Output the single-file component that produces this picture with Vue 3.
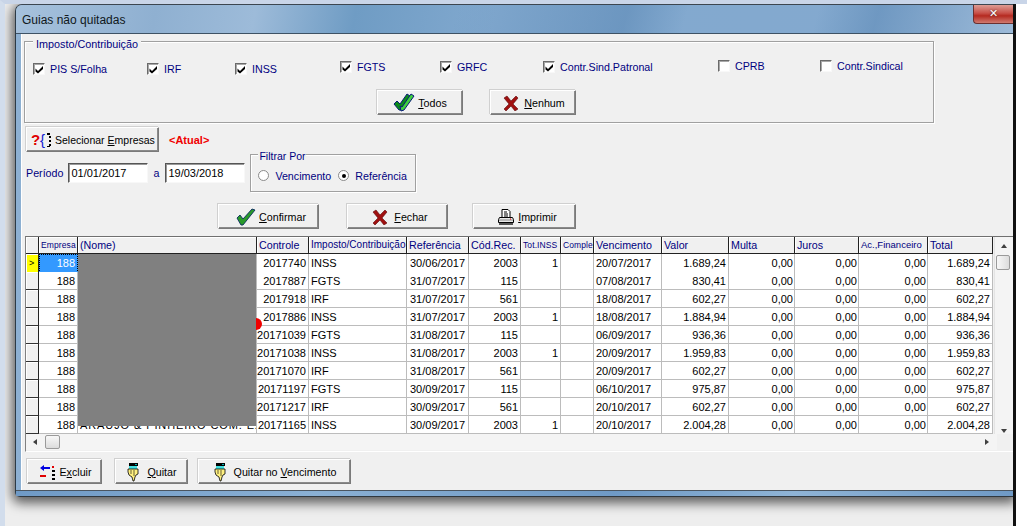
<script setup>
const checks = [
  { label: 'PIS S/Folha', on: true, pos: 'low' },
  { label: 'IRF', on: true, pos: 'low' },
  { label: 'INSS', on: true, pos: 'low' },
  { label: 'FGTS', on: true, pos: 'mid' },
  { label: 'GRFC', on: true, pos: 'mid' },
  { label: 'Contr.Sind.Patronal', on: true, pos: 'mid' },
  { label: 'CPRB', on: false, pos: 'high' },
  { label: 'Contr.Sindical', on: false, pos: 'high' }
]
const headers = [
  { t: '', c: 'ind' },
  { t: 'Empresa', c: 'tiny' },
  { t: '(Nome)', c: '' },
  { t: 'Controle', c: '' },
  { t: 'Imposto/Contribuição', c: 'small' },
  { t: 'Referência', c: '' },
  { t: 'Cód.Rec.', c: '' },
  { t: 'Tot.INSS', c: 'tiny' },
  { t: 'Comple', c: 'tiny' },
  { t: 'Vencimento', c: '' },
  { t: 'Valor', c: '' },
  { t: 'Multa', c: '' },
  { t: 'Juros', c: '' },
  { t: 'Ac.,Financeiro', c: 'smaller' },
  { t: 'Total', c: '' }
]
const rows = [
  ['2017740', 'INSS', '30/06/2017', '2003', '1', '20/07/2017', '1.689,24'],
  ['2017887', 'FGTS', '31/07/2017', '115', '', '07/08/2017', '830,41'],
  ['2017918', 'IRF', '31/07/2017', '561', '', '18/08/2017', '602,27'],
  ['2017886', 'INSS', '31/07/2017', '2003', '1', '18/08/2017', '1.884,94'],
  ['20171039', 'FGTS', '31/08/2017', '115', '', '06/09/2017', '936,36'],
  ['20171038', 'INSS', '31/08/2017', '2003', '1', '20/09/2017', '1.959,83'],
  ['20171070', 'IRF', '31/08/2017', '561', '', '20/09/2017', '602,27'],
  ['20171197', 'FGTS', '30/09/2017', '115', '', '06/10/2017', '975,87'],
  ['20171217', 'IRF', '30/09/2017', '561', '', '20/10/2017', '602,27'],
  ['20171165', 'INSS', '30/09/2017', '2003', '1', '20/10/2017', '2.004,28']
]
</script>

<template>
  <div class="page">
    <div class="desk">
      <div class="window">
        <div class="title">
          <span class="title-text">Guias não quitadas</span>
          <div class="close"><span class="close-x">✕</span></div>
        </div>
        <div class="client">
          <div class="group">
            <span class="legend">Imposto/Contribuição</span>
            <div class="checks">
              <label v-for="c in checks" :key="c.label" class="check" :class="c.pos">
                <span class="box">
                  <svg v-if="c.on" width="9" height="9" viewBox="0 0 9 9"><path d="M0.500 3.500l2.500 2.500L8 1v3L3 8.500.5 6.500z" fill="#000"/></svg>
                </span>
                <span>{{ c.label }}</span>
              </label>
            </div>
            <div class="group-btns">
              <button class="btn btn-all">
                <svg width="22" height="20" viewBox="0 0 22 20">
                  <path d="M1 11l3-3 3 3 7-10 3 2-9 14h-2z" fill="#0c8a1c" stroke="#0a1a78" stroke-width="1"/>
                  <path d="M7 13l2 1 9-13 3 2-10 14-3 1z" fill="#3fcf3f" stroke="#0a1a78" stroke-width="1"/>
                </svg>
                <span class="cap"><u>T</u>odos</span>
              </button>
              <button class="btn btn-none">
                <svg width="16" height="16" viewBox="0 0 16 16"><path d="M1 3l3-2 4 5 5-5 2 2-5 6 5 5-3 2-4-5-5 5-2-2 5-5z" fill="#a01010" stroke="#5c0808" stroke-width=".6"/></svg>
                <span class="cap"><u>N</u>enhum</span>
              </button>
            </div>
          </div>

          <div class="row-select">
            <button class="btn btn-select">
              <svg width="24" height="18" viewBox="0 0 24 18">
                <text x="0" y="14" font-family="Liberation Sans" font-weight="700" font-size="15" fill="#e00000">?</text>
                <text x="9" y="14" font-family="Liberation Sans" font-size="15" fill="#1020d0">{</text>
                <path d="M16 2h3v2h-3zM18 5h2v2h-2zM18 9h2v2h-2zM18 13h2v2h-2zM16 15h3v1h-3z" fill="#000"/>
              </svg>
              <span class="cap">Selecionar <u>E</u>mpresas</span>
            </button>
            <span class="atual">&lt;Atual&gt;</span>
          </div>

          <div class="row-period">
            <span class="navy">Período</span>
            <span class="input first">01/01/2017</span>
            <span class="navy sep">a</span>
            <span class="input">19/03/2018</span>
            <div class="filter">
              <span class="legend legend-filter">Filtrar Por</span>
              <span class="radio"></span>
              <span class="navy lbl1">Vencimento</span>
              <span class="radio on"></span>
              <span class="navy">Referência</span>
            </div>
          </div>

          <div class="row-actions">
            <button class="btn btn-confirm">
              <svg width="20" height="18" viewBox="0 0 20 18"><path d="M1 10l3-3 3 4 9-10 3 1-12 15H5z" fill="#2a9a2a" stroke="#0a2a60" stroke-width=".9"/></svg>
              <span class="cap"><u>C</u>onfirmar</span>
            </button>
            <button class="btn btn-close">
              <svg width="16" height="16" viewBox="0 0 16 16"><path d="M1 3l3-2 4 5 5-5 2 2-5 6 5 5-3 2-4-5-5 5-2-2 5-5z" fill="#a01010" stroke="#5c0808" stroke-width=".6"/></svg>
              <span class="cap"><u>F</u>echar</span>
            </button>
            <button class="btn btn-print">
              <svg width="18" height="18" viewBox="0 0 18 18">
                <path d="M5 1.500h6l2 2v6H5z" fill="#fff" stroke="#000"/>
                <path d="M7 4h3M7 6h4M7 8h4" stroke="#000"/>
                <path d="M2.500 9.500h13l1 2v3h-15v-3z" fill="#e8e8e8" stroke="#000"/>
                <path d="M2 12h14" stroke="#888"/>
                <rect x="13" y="10.500" width="1" height="1" fill="#e00000"/>
                <rect x="2" y="15" width="14" height="2" fill="#555"/>
              </svg>
              <span class="cap"><u>I</u>mprimir</span>
            </button>
          </div>

          <div class="frame">
            <div class="table-wrap">
              <div class="table">
                <div class="tr head">
                  <div v-for="h in headers" :key="h.t" class="th" :class="h.c">{{ h.t }}</div>
                </div>
                <div class="body">
                  <div v-for="(r, i) in rows" :key="r[0]" class="tr">
                    <div class="ind-cell" :class="{ cur: i === 0 }">{{ i === 0 ? '>' : '' }}</div>
                    <div class="td num" :class="{ sel: i === 0 }">188</div>
                    <div class="td name">{{ i === 9 ? 'ARAUJO & PINHEIRO COM. EXTER' : '' }}</div>
                    <div class="td num">{{ r[0] }}</div>
                    <div class="td">{{ r[1] }}</div>
                    <div class="td ref">{{ r[2] }}</div>
                    <div class="td num">{{ r[3] }}</div>
                    <div class="td num">{{ r[4] }}</div>
                    <div class="td"></div>
                    <div class="td">{{ r[5] }}</div>
                    <div class="td num">{{ r[6] }}</div>
                    <div class="td num zero">0,00</div>
                    <div class="td num zero">0,00</div>
                    <div class="td num zero">0,00</div>
                    <div class="td num">{{ r[6] }}</div>
                  </div>
                  <div class="dot"></div>
                  <div class="mask"></div>
                </div>
              </div>
              <div class="vbar">
                <span class="arrow up"></span>
                <span class="vthumb"></span>
                <span class="arrow down"></span>
              </div>
            </div>
            <div class="hbar">
              <span class="arrow left"></span>
              <span class="hthumb"></span>
              <span class="arrow right"></span>
            </div>
          </div>

          <div class="row-bottom">
            <button class="btn btn-del">
              <svg width="20" height="18" viewBox="0 0 20 18">
                <path d="M3 5l4-3v2h6v2H7v2z" fill="#0000e0"/>
                <rect x="3" y="12" width="6" height="2" fill="#e00000"/>
                <rect x="15" y="3" width="2" height="2" fill="#e00000"/>
                <path d="M15 7h3v2h-3zM15 11h3v2h-3zM15 15h3v2h-3z" fill="#000"/>
              </svg>
              <span class="cap">E<u>x</u>cluir</span>
            </button>
            <button class="btn btn-pay">
              <svg width="14" height="20" viewBox="0 0 14 20">
                <path d="M3 1h9v3H3z" fill="#000"/>
                <rect x="9" y="2" width="2" height="1" fill="#00b0b0"/>
                <rect x="3" y="4" width="8" height="3" fill="#40e0e0"/>
                <path d="M2 7h10v5l-2 1-1 2-1 4H7l-1-4-3-2-1-3z" fill="#fff080" stroke="#000" stroke-width=".8"/>
                <path d="M5 8v4M8 8v6" stroke="#000" stroke-width=".6"/>
              </svg>
              <span class="cap"><u>Q</u>uitar</span>
            </button>
            <button class="btn btn-payall">
              <svg width="14" height="20" viewBox="0 0 14 20">
                <path d="M3 1h9v3H3z" fill="#000"/>
                <rect x="9" y="2" width="2" height="1" fill="#00b0b0"/>
                <rect x="3" y="4" width="8" height="3" fill="#40e0e0"/>
                <path d="M2 7h10v5l-2 1-1 2-1 4H7l-1-4-3-2-1-3z" fill="#fff080" stroke="#000" stroke-width=".8"/>
                <path d="M5 8v4M8 8v6" stroke="#000" stroke-width=".6"/>
              </svg>
              <span class="cap">Quitar no <u>V</u>encimento</span>
            </button>
          </div>
        </div>
        <div class="bottom-edge"></div>
      </div>
    </div>
  </div>
</template>

<style>
html, body { margin: 0; background: #fff; overflow: hidden; }
</style>

<style scoped>
.page {
  width: 1027px;
  height: 526px;
  box-sizing: border-box;
  border-left: 5px solid #d2ddec;
  border-top: 4px solid #c9d5e8;
  background: #fff;
  overflow: hidden;
  font-family: "Liberation Sans", Arial, sans-serif;
  font-size: 10.7px;
  color: #000;
}
.desk {
  width: 1011px;
  height: 522px;
  box-sizing: border-box;
  border-right: 3px solid #111;
  background: #eeeeee;
  padding-left: 10px;
  overflow: hidden;
}
.window {
  width: 998px;
  height: 493px;
  box-sizing: border-box;
  border-left: 1px solid #2c3a46;
  border-top: 1px solid #3c4650;
  border-bottom: 1px solid #30383f;
  border-radius: 7px 0 0 5px;
  display: flex;
  flex-direction: column;
  box-shadow: 0 3px 12px 3px rgba(0, 0, 0, .62);
  background: #8db0d2;
}
.title {
  height: 28px;
  flex: none;
  border-bottom: 1px solid #3e5264;
  box-sizing: content-box;
  display: flex;
  justify-content: space-between;
  align-items: flex-start;
  background:
    linear-gradient(105deg, rgba(255,255,255,0) 44%, rgba(90,135,180,.55) 61%, rgba(255,255,255,0) 67%, rgba(255,255,255,0) 80%, rgba(90,135,180,.5) 86%, rgba(255,255,255,.2) 100%),
    linear-gradient(100deg, #a6c1dc 0%, #8fb0d1 14%, #9dbbd9 24%, #6f9cc4 34%, #82a9cf 48%, #84a9cf 100%);
  border-radius: 6px 0 0 0;
}
.title-text {
  margin: 8px 0 0 6px;
  font-size: 12px;
  line-height: 14px;
  color: #101820;
}
.close {
  width: 40px;
  height: 19px;
  box-sizing: border-box;
  border: 1px solid #6b3030;
  border-top: 0;
  border-right: 0;
  border-radius: 0 0 0 4px;
  background: linear-gradient(#dd9c94, #c85048 45%, #b52a20 60%, #d07a70);
  display: flex;
  align-items: center;
  justify-content: center;
}
.close-x {
  color: #fff;
  font-family: "DejaVu Sans", sans-serif;
  font-weight: 700;
  font-size: 11px;
  line-height: 12px;
  text-shadow: 0 0 2px #402020;
}
.client {
  flex: 1;
  min-height: 0;
  margin-left: 5px;
  background: #f0f0f0;
  border-left: 1px solid #fff;
  box-sizing: border-box;
  padding: 7px 0 0 2px;
  display: flex;
  flex-direction: column;
}
.bottom-edge {
  height: 6px;
  flex: none;
  border-top: 1px solid #4a5560;
  box-sizing: border-box;
  background: linear-gradient(90deg, #6f9ac6 0%, #8ab0d4 30%, #6f9ac6 60%, #8fb4d6 78%, #6f9ac6 100%);
}
.group {
  position: relative;
  width: 910px;
  height: 82px;
  flex: none;
  box-sizing: border-box;
  border: 1px solid #a0a0a0;
  box-shadow: inset 1px 1px 0 #fff, 1px 1px 0 #fff;
}
.legend {
  position: absolute;
  left: 8px;
  top: -4px;
  padding: 0 3px;
  background: #f0f0f0;
  color: #000080;
  line-height: 13px;
  font-size: 10.8px;
}
.checks {
  display: grid;
  grid-template-columns: 114px 88px 105px 100px 103px 175px 102px 110px;
  padding: 18px 0 0 8px;
  height: 16px;
}
.check {
  display: flex;
  align-items: center;
  gap: 5px;
  height: 14px;
  color: #000080;
}
.check.low { margin-top: 2px; }
.check.mid { margin-top: 0; }
.check.high { margin-top: -1px; }
.box {
  width: 12px;
  height: 12px;
  flex: none;
  box-sizing: border-box;
  background: #fff;
  border: 1px solid;
  border-color: #6a6a6a #f8f8f8 #f8f8f8 #6a6a6a;
  box-shadow: inset 1px 1px 0 #a8a8a8;
  display: flex;
  align-items: center;
  justify-content: center;
}
.group-btns {
  display: flex;
  gap: 27px;
  padding: 14px 0 0 352px;
}
.btn {
  height: 25px;
  flex: none;
  box-sizing: border-box;
  padding: 0;
  background: #f0f0f0;
  border: 1px solid;
  border-color: #fff #7a7a7a #7a7a7a #fff;
  box-shadow: inset -1px -1px 0 #8a8a8a, -1px -1px 0 #d0d0d0;
  font: inherit;
  color: #000;
  display: flex;
  align-items: center;
  justify-content: center;
  gap: 3px;
}
.cap { line-height: 14px; white-space: nowrap; }
.btn-all { width: 86px; }
.btn-none { width: 86px; gap: 5px; padding-left: 2px; }
.btn-select { width: 133px; gap: 0; justify-content: flex-start; padding-left: 4px; font-size: 10.500px; }
.row-select {
  display: flex;
  align-items: center;
  gap: 10px;
  margin: 4px 0 0 2px;
  height: 25px;
  flex: none;
}
.atual {
  color: #f00000;
  font-weight: 700;
  font-size: 11px;
}
.row-period {
  display: flex;
  align-items: center;
  height: 38px;
  margin: 2px 0 0 2px;
  flex: none;
}
.navy { color: #000080; }
.input {
  width: 80px;
  height: 20px;
  box-sizing: border-box;
  margin-left: 4px;
  padding-left: 2px;
  line-height: 18px;
  font-size: 11px;
  background: #fff;
  border: 1px solid;
  border-color: #555 #f8f8f8 #f8f8f8 #555;
  box-shadow: inset 1px 1px 0 #999;
}
.input.first { margin-left: 5px; }
.sep { margin: 0 2px 0 5px; }
.filter {
  position: relative;
  margin-left: 5px;
  width: 166px;
  height: 38px;
  box-sizing: border-box;
  border: 1px solid #a0a0a0;
  box-shadow: inset 1px 1px 0 #fff, 1px 1px 0 #fff;
  display: flex;
  align-items: center;
  padding: 5px 0 0 7px;
}
.legend-filter { left: 7px; top: -5px; padding: 0 1px; font-size: 10.500px; }
.radio {
  width: 11px;
  height: 11px;
  flex: none;
  box-sizing: border-box;
  border-radius: 50%;
  border: 1px solid #8a8a8a;
  background: #fff;
  margin-right: 6px;
  display: flex;
  align-items: center;
  justify-content: center;
}
.radio.on::after {
  content: "";
  width: 4px;
  height: 4px;
  background: #000;
  border-radius: 50%;
}
.lbl1 { margin-right: 7px; }
.row-actions {
  display: flex;
  height: 25px;
  margin: 12px 0 0 194px;
  flex: none;
}
.btn-confirm { width: 101px; padding-left: 5px; }
.btn-close { width: 101px; margin-left: 28px; gap: 6px; padding-left: 5px; }
.btn-print { width: 103px; margin-left: 25px; padding-left: 5px; }
.frame {
  width: 989px;
  height: 216px;
  margin: 7px 0 0 1px;
  flex: none;
  box-sizing: border-box;
  border-top: 1px solid #707070;
  border-left: 1px solid #808080;
  border-bottom: 1px solid #fff;
  display: flex;
  flex-direction: column;
  background: #f0f0f0;
}
.table-wrap {
  display: flex;
  height: 197px;
  flex: none;
}
.table { width: 968px; flex: none; overflow: hidden; }
.tr {
  display: grid;
  grid-template-columns: 13px 39px 179px 52px 98px 62px 52px 40px 33px 68px 67px 66px 64px 69px 65px;
  height: 18px;
}
.head { height: 17px; }
.th {
  box-sizing: border-box;
  border-right: 1px solid #222;
  border-bottom: 1px solid #222;
  box-shadow: inset 1px 1px 0 #fff;
  color: #000080;
  padding-left: 2px;
  line-height: 16px;
  white-space: nowrap;
  overflow: hidden;
  background: #f0f0f0;
}
.th.ind { padding: 0; }
.th.tiny { font-size: 8.500px; letter-spacing: .1px; }
.th.small { font-size: 10px; }
.th.smaller { font-size: 9.500px; }
.body { position: relative; height: 180px; overflow: hidden; }
.td {
  box-sizing: border-box;
  background: #fff;
  border-right: 1px solid #bcbcbc;
  border-bottom: 1px solid #bcbcbc;
  padding: 0 0 0 2px;
  font-size: 11px;
  line-height: 18px;
  white-space: nowrap;
  overflow: hidden;
}
.num { text-align: right; padding: 0 2px 0 0; }
.zero { padding-right: 1px; }
.ref { padding-left: 3px; }
.sel {
  background: #3399ff;
  color: #fff;
  outline: 1px dotted #000;
  outline-offset: -1px;
  border-color: #3399ff;
}
.name { letter-spacing: .9px; }
.ind-cell {
  box-sizing: border-box;
  background: #f0f0f0;
  border-right: 1px solid #222;
  border-bottom: 1px solid #333;
  box-shadow: inset 1px 1px 0 #fff;
  font-size: 9px;
  line-height: 18px;
  padding-left: 3px;
}
.cur { background: #ffff00; }
.mask {
  position: absolute;
  left: 52px;
  top: 0;
  width: 178px;
  height: 172px;
  background: #808080;
}
.dot {
  position: absolute;
  left: 224px;
  top: 64px;
  width: 12px;
  height: 12px;
  border-radius: 50%;
  background: #f00000;
}
.vbar {
  width: 19px;
  flex: none;
  position: relative;
  background: #f4f4f4;
  display: flex;
  flex-direction: column;
  align-items: center;
  border-left: 1px solid #e4e4e4;
  box-sizing: border-box;
}
.vthumb {
  width: 14px;
  height: 15px;
  margin: 7px 2px 0 0;
  box-sizing: border-box;
  border: 1px solid #9a9a9a;
  border-radius: 2px;
  background: linear-gradient(90deg, #f8f8f8, #dcdcdc);
}
.arrow { width: 0; height: 0; border: 3px solid transparent; flex: none; }
.up { border-bottom: 4px solid #404040; border-top: 0; margin-top: 7px; }
.down { border-top: 4px solid #404040; border-bottom: 0; margin-top: 159px; }
.hbar {
  height: 16px;
  width: 971px;
  flex: none;
  background: #f4f4f4;
  display: flex;
  align-items: center;
  box-sizing: border-box;
  padding-left: 7px;
}
.left { border-right: 4px solid #404040; border-left: 0; }
.right { border-left: 4px solid #404040; border-right: 0; margin-left: 925px; }
.hthumb {
  width: 15px;
  height: 14px;
  margin-left: 8px;
  box-sizing: border-box;
  border: 1px solid #9a9a9a;
  border-radius: 2px;
  background: linear-gradient(#f8f8f8, #dcdcdc);
}
.row-bottom {
  display: flex;
  height: 25px;
  margin: 7px 0 0 3px;
  flex: none;
}
.btn-del { width: 75px; gap: 2px; }
.btn-pay { width: 73px; margin-left: 13px; gap: 7px; }
.btn-payall { width: 153px; margin-left: 10px; gap: 7px; }
</style>
